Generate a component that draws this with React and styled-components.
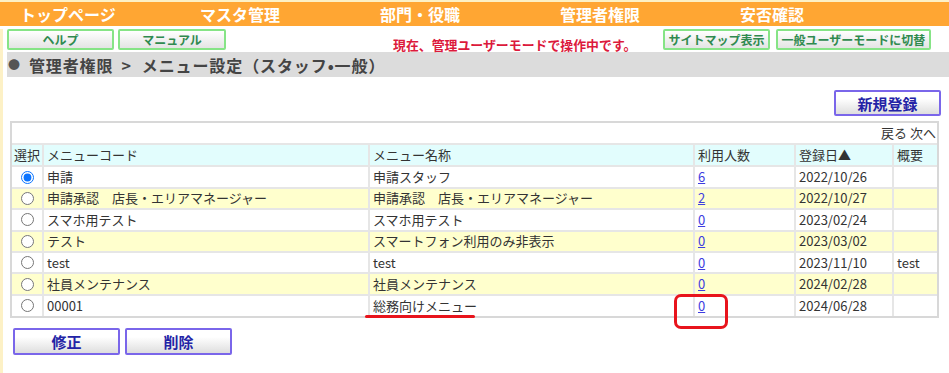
import React from "react";
import styled, { createGlobalStyle } from "styled-components";

const PaleYellow = "#fdf1c6";
const NavItems = ["トップページ", "マスタ管理", "部門・役職", "管理者権限", "安否確認"];

const Rows = [
  { code: "申請", name: "申請スタッフ", users: 6, date: "2022/10/26", note: "", checked: true },
  { code: "申請承認　店長・エリアマネージャー", name: "申請承認　店長・エリアマネージャー", users: 2, date: "2022/10/27", note: "" },
  { code: "スマホ用テスト", name: "スマホ用テスト", users: 0, date: "2023/02/24", note: "" },
  { code: "テスト", name: "スマートフォン利用のみ非表示", users: 0, date: "2023/03/02", note: "" },
  { code: "test", name: "test", users: 0, date: "2023/11/10", note: "test" },
  { code: "社員メンテナンス", name: "社員メンテナンス", users: 0, date: "2024/02/28", note: "" },
  { code: "00001", name: "総務向けメニュー", users: 0, date: "2024/06/28", note: "" },
];

const GlobalStyle = createGlobalStyle`
  html, body { margin: 0; padding: 0; background: #fff; }
  body { font-family: "Noto Sans CJK JP", "Noto Sans", sans-serif; color: #333; overflow: hidden; }
`;

const Page = styled.div`
  position: relative;
  width: 949px;
  height: 373px;
  border-top: 2px solid ${PaleYellow};
  box-sizing: border-box;
`;

const NavBar = styled.nav`
  display: grid;
  grid-template-columns: repeat(5, 180px);
  height: 24px;
  padding-left: 20px;
  background: #ffa633;
`;

const NavItem = styled.div`
  color: #fff;
  font-size: 16px;
  font-weight: 700;
  line-height: 24px;
  white-space: nowrap;
`;

const Content = styled.div`
  height: 347px;
  box-sizing: border-box;
  border-left: 3px solid ${PaleYellow};
  border-bottom: 3px solid ${PaleYellow};
  padding-left: 4px;
`;

const ToolRow = styled.div`
  display: flex;
  align-items: flex-end;
  height: 21px;
  margin-top: 3px;
  padding-right: 18px;
`;

const ButtonGroup = styled.div`
  display: flex;
  gap: ${(p) => p.$gap || 4}px;
  margin-left: ${(p) => (p.$right ? "auto" : "0")};
`;

const GreenButton = styled.button`
  width: ${(p) => p.$w}px;
  height: 21px;
  padding: 0;
  border: 2px solid #86e486;
  border-radius: 2px;
  background: linear-gradient(#ffffff, #e4e4e4);
  color: #2f8a4f;
  font-family: inherit;
  font-size: 12px;
  font-weight: 700;
  line-height: 17px;
`;

const Notice = styled.div`
  margin-left: 167px;
  margin-bottom: -3px;
  color: #dc1a3c;
  font-size: 12.9px;
  font-weight: 700;
  line-height: 16px;
  white-space: nowrap;
`;

const Breadcrumb = styled.div`
  display: flex;
  align-items: center;
  height: 25px;
  margin-top: 2px;
  margin-right: -10px;
  padding-left: 1px;
  background: #dcdcdc;
  color: #444;
  font-size: 16px;
  font-weight: 700;
  letter-spacing: 0.9px;
  white-space: nowrap;
`;

const Bullet = styled.span`
  font-size: 12px;
  margin-right: 8px;
  color: #555;
`;

const Separator = styled.span`
  margin: 0 10px 0 8px;
`;

const ActionRow = styled.div`
  display: flex;
  justify-content: ${(p) => (p.$left ? "flex-start" : "flex-end")};
  gap: 5px;
  margin-top: ${(p) => p.$top}px;
  padding: ${(p) => (p.$left ? "0 0 0 6px" : "0 8px 0 0")};
`;

const PurpleButton = styled.button`
  width: 107px;
  height: ${(p) => p.$h || 26}px;
  padding: 0;
  border: 2px solid #7a66ea;
  border-radius: 2px;
  background: linear-gradient(#ffffff 30%, #dedede);
  color: #2323a6;
  font-family: inherit;
  font-size: 15px;
  font-weight: 700;
`;

const TableFrame = styled.div`
  width: 929px;
  margin: 5px 0 0 3px;
  border: 2px solid #d8d8d8;
  box-sizing: border-box;
`;

const Pager = styled.div`
  height: 20px;
  padding-right: 1px;
  text-align: right;
  font-size: 13px;
  line-height: 20px;
  border-bottom: 2px solid #e6e6e6;
`;

const Table = styled.table`
  width: 100%;
  border-collapse: collapse;
  table-layout: fixed;
  font-size: 13px;
`;

const Row = styled.tr`
  height: 21.4px;
  background: ${(p) => p.$bg};
`;

const Cell = styled.td`
  padding: 0 0 0 3px;
  border-left: 2px solid #e6e6e6;
  border-top: ${(p) => (p.$first ? "0" : "2px solid #e6e6e6")};
  white-space: nowrap;
  overflow: hidden;
  text-align: ${(p) => (p.$center ? "center" : "left")};
  line-height: 16px;
  &:first-child { border-left: 0; padding: 0; }
`;

const Radio = styled.input`
  width: 13px;
  height: 13px;
  margin: 3px 0 0 0;
  accent-color: #0b74ff;
`;

const CountLink = styled.a`
  color: #3d3de0;
  text-decoration: underline;
`;

const Underline = styled.div`
  position: absolute;
  left: 365px;
  top: 313px;
  width: 110px;
  height: 3px;
  border-radius: 2px;
  background: #e8141c;
`;

const Circle = styled.div`
  position: absolute;
  left: 674px;
  top: 292px;
  width: 54px;
  height: 35px;
  box-sizing: border-box;
  border: 3px solid #e8141c;
  border-radius: 7px;
`;

export default function App() {
  return (
    <Page>
      <GlobalStyle />
      <NavBar>
        {NavItems.map((item) => (
          <NavItem key={item}>{item}</NavItem>
        ))}
      </NavBar>
      <Content>
        <ToolRow>
          <ButtonGroup>
            <GreenButton $w={107}>ヘルプ</GreenButton>
            <GreenButton $w={108}>マニュアル</GreenButton>
          </ButtonGroup>
          <Notice>現在、管理ユーザーモードで操作中です。</Notice>
          <ButtonGroup $right $gap={6}>
            <GreenButton $w={107}>サイトマップ表示</GreenButton>
            <GreenButton $w={155}>一般ユーザーモードに切替</GreenButton>
          </ButtonGroup>
        </ToolRow>
        <Breadcrumb>
          <Bullet>●</Bullet>管理者権限<Separator>&gt;</Separator>メニュー設定（スタッフ•一般）
        </Breadcrumb>
        <ActionRow $top={13}>
          <PurpleButton>新規登録</PurpleButton>
        </ActionRow>
        <TableFrame>
          <Pager>戻る 次へ</Pager>
          <Table>
            <colgroup>
              <col style={{ width: 31 }} />
              <col style={{ width: 326 }} />
              <col style={{ width: 325 }} />
              <col style={{ width: 101 }} />
              <col style={{ width: 98 }} />
              <col />
            </colgroup>
            <tbody>
              <Row $bg="#e2fdfd">
                <Cell $first $center>選択</Cell>
                <Cell $first>メニューコード</Cell>
                <Cell $first>メニュー名称</Cell>
                <Cell $first>利用人数</Cell>
                <Cell $first>登録日▲</Cell>
                <Cell $first>概要</Cell>
              </Row>
              {Rows.map((r, i) => (
                <Row key={r.date} $bg={i % 2 ? "#ffffcd" : "#fff"}>
                  <Cell $center>
                    <Radio type="radio" name="menu" defaultChecked={!!r.checked} />
                  </Cell>
                  <Cell>{r.code}</Cell>
                  <Cell>{r.name}</Cell>
                  <Cell>
                    <CountLink href="#">{r.users}</CountLink>
                  </Cell>
                  <Cell>{r.date}</Cell>
                  <Cell>{r.note}</Cell>
                </Row>
              ))}
            </tbody>
          </Table>
        </TableFrame>
        <ActionRow $left $top={10}>
          <PurpleButton $h={27}>修正</PurpleButton>
          <PurpleButton $h={27}>削除</PurpleButton>
        </ActionRow>
      </Content>
      <Underline />
      <Circle />
    </Page>
  );
}
